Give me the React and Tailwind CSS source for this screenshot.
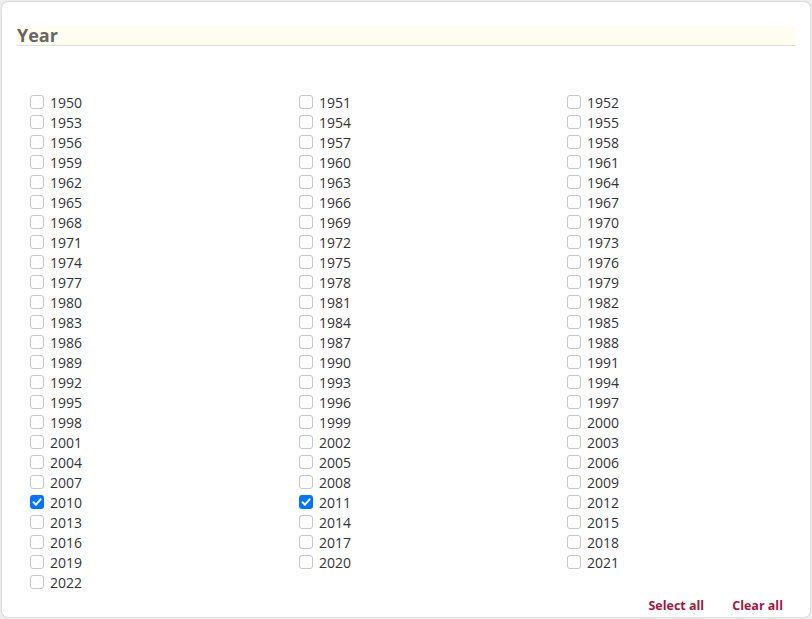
import { useState } from "react";

const YEARS = Array.from({ length: 2022 - 1950 + 1 }, (_, i) => 1950 + i);

export default function App() {
  const [checked, setChecked] = useState(new Set([2010, 2011]));

  const toggle = (y) => {
    setChecked((prev) => {
      const next = new Set(prev);
      next.has(y) ? next.delete(y) : next.add(y);
      return next;
    });
  };

  return (
    <div className="min-h-[619px] bg-[#eeeeee] p-[2px]" style={{ fontFamily: "'Open Sans', sans-serif" }}>
      <div className="h-[615px] bg-white rounded-md shadow-[0_0_2px_rgba(0,0,0,0.25)] pt-[24px] px-[15px] flex flex-col">
        {/* Header */}
        <div className="h-[20px] bg-[#fffdf0] border-b border-[#dddddd] flex items-end">
          <h2 className="text-[18px] font-bold text-[#666666] leading-[20px]">Year</h2>
        </div>

        {/* Year list */}
        <div className="mt-[46px] pl-[13px] grid grid-cols-[269px_268px_1fr] text-[14px] text-[#333333]">
          {YEARS.map((y) => {
            const on = checked.has(y);
            return (
              <label key={y} className="h-5 flex items-center gap-[6px] cursor-pointer">
                <input type="checkbox" checked={on} onChange={() => toggle(y)} className="sr-only" />
                <span
                  className={`w-[14px] h-[14px] rounded-[3px] flex items-center justify-center ${
                    on ? "bg-[#0075ff]" : "border border-[#c8c8c8] bg-white"
                  }`}
                >
                  {on && (
                    <svg viewBox="0 0 14 14" className="w-[14px] h-[14px]" fill="none" stroke="white" strokeWidth={2} strokeLinecap="round" strokeLinejoin="round">
                      <path d="M3.5 7.3 6 9.7 10.6 4.3" />
                    </svg>
                  )}
                </span>
                <span>{y}</span>
              </label>
            );
          })}
        </div>

        {/* Actions */}
        <div className="mt-auto mb-[1px] flex justify-end gap-[28px] pr-[12px] text-[12.5px] font-bold text-[#a3173f]">
          <button type="button" onClick={() => setChecked(new Set(YEARS))}>Select all</button>
          <button type="button" onClick={() => setChecked(new Set())}>Clear all</button>
        </div>
      </div>
    </div>
  );
}
